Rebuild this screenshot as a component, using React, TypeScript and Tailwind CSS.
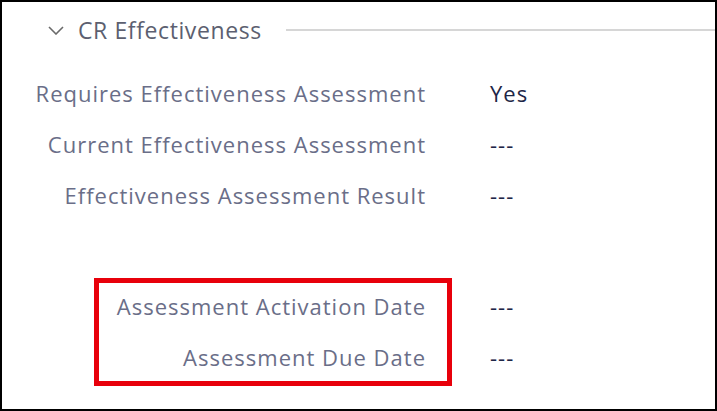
const rows = [
  { label: 'Requires Effectiveness Assessment', value: 'Yes' },
  { label: 'Current Effectiveness Assessment', value: '---' },
  { label: 'Effectiveness Assessment Result', value: '---' },
];

const dateRows = [
  { label: 'Assessment Activation Date', value: '---' },
  { label: 'Assessment Due Date', value: '---' },
];

export default function App() {
  return (
    <div
      className="w-[717px] h-[411px] bg-white border-2 border-black overflow-hidden flex flex-col"
      style={{ fontFamily: '"Open Sans", "Noto Sans", sans-serif' }}
    >
      {/* section header */}
      <div className="flex items-center h-[54px] pl-[46px] pt-[2px]">
        <svg width="16" height="9" viewBox="0 0 16 9" className="text-[#6a6a6a]">
          <polyline points="1,1 8,8 15,1" fill="none" stroke="currentColor" strokeWidth="1.6" />
        </svg>
        <span className="ml-[14px] text-[23px] tracking-[0.6px] text-[#5c5f70] leading-none">CR Effectiveness</span>
        <div className="flex-1 ml-[24px] h-[2px] bg-[#d6d6d6]" />
      </div>

      <div className="flex flex-col mt-[12px]">
        {rows.map((r) => (
          <div key={r.label} className="flex items-center h-[51px]">
            <div className="w-[424px] text-right text-[22px] tracking-[1px] text-[#6a6e88] whitespace-nowrap">{r.label}</div>
            <div className="ml-[64px] text-[22px] tracking-[1px] text-[#1e2647]">{r.value}</div>
          </div>
        ))}
      </div>

      <div className="flex mt-[57px]">
        <div className="ml-[92px] w-[358px] border-[5px] border-[#e8000b] flex flex-col gap-[5px] pb-[1px] pr-[21px]">
          {dateRows.map((r) => (
            <div key={r.label} className="h-[46px] flex items-center justify-end text-[22px] tracking-[1px] text-[#6a6e88] whitespace-nowrap">
              {r.label}
            </div>
          ))}
        </div>
        <div className="ml-[38px] flex flex-col gap-[5px] pt-[5px]">
          {dateRows.map((r) => (
            <div key={r.label} className="h-[46px] flex items-center text-[22px] tracking-[1px] text-[#1e2647]">
              {r.value}
            </div>
          ))}
        </div>
      </div>
    </div>
  );
}
